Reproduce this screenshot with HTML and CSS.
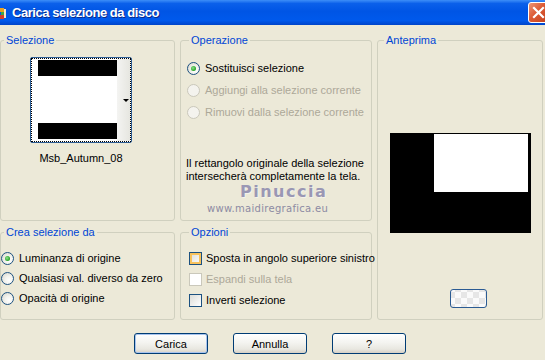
FILE: index.html
```html
<!DOCTYPE html>
<html lang="it">
<head>
    <meta charset="UTF-8">
    <title>Carica selezione da disco</title>
    <link rel="stylesheet" href="styles.css">
</head>
<body>
    <div class="titlebar">
        <svg class="title-icon" width="6" height="14" viewBox="0 0 6 14">
            <rect x="0" y="2" width="4" height="4" fill="#e8a020"/>
            <rect x="1" y="6" width="4" height="3" fill="#3aa84a"/>
            <rect x="0" y="9" width="4" height="4" fill="#d23c2a"/>
            <rect x="4" y="3" width="2" height="9" fill="#f4e8c8"/>
        </svg>
        <span class="title-text">Carica selezione da disco</span>
        <span class="close-btn">
            <svg width="13" height="13" viewBox="0 0 13 13">
                <path d="M2 2 L11 11 M11 2 L2 11" stroke="#fff" stroke-width="2.2" stroke-linecap="square"/>
            </svg>
        </span>
    </div>

    <div class="content">
        <div class="groups">
            <fieldset class="group group-sel">
                <legend class="lg-near">Selezione</legend>
                <div class="thumb-wrap">
                    <div class="thumb">
                        <div class="thumb-focus">
                            <div class="thumb-img">
                                <div class="bar"></div>
                                <div class="bar"></div>
                            </div>
                            <div class="thumb-side"><span class="arrow"></span></div>
                        </div>
                    </div>
                    <div class="caption">Msb_Autumn_08</div>
                </div>
            </fieldset>

            <fieldset class="group group-op">
                <legend class="lg-far">Operazione</legend>
                <div class="opt-list op-list">
                    <div class="opt"><span class="radio checked"></span>Sostituisci selezione</div>
                    <div class="opt disabled"><span class="radio"></span>Aggiungi alla selezione corrente</div>
                    <div class="opt disabled"><span class="radio"></span>Rimuovi dalla selezione corrente</div>
                </div>
                <p class="note">Il rettangolo originale della selezione<br>intersecherà completamente la tela.</p>
                <div class="watermark">
                    <span class="wm-name">Pinuccia</span>
                    <span class="wm-url">www.maidiregrafica.eu</span>
                </div>
            </fieldset>

            <fieldset class="group group-prev">
                <legend class="lg-mid">Anteprima</legend>
                <div class="preview"><div class="preview-sel"></div></div>
                <span class="swatch-btn"></span>
            </fieldset>

            <fieldset class="group group-crea">
                <legend class="lg-near">Crea selezione da</legend>
                <div class="opt-list crea-list">
                    <div class="opt"><span class="radio checked"></span>Luminanza di origine</div>
                    <div class="opt"><span class="radio"></span>Qualsiasi val. diverso da zero</div>
                    <div class="opt"><span class="radio"></span>Opacità di origine</div>
                </div>
            </fieldset>

            <fieldset class="group group-opz">
                <legend class="lg-far">Opzioni</legend>
                <div class="opt-list opz-list">
                    <div class="opt"><span class="check hot"></span>Sposta in angolo superiore sinistro</div>
                    <div class="opt disabled"><span class="check"></span>Espandi sulla tela</div>
                    <div class="opt"><span class="check"></span>Inverti selezione</div>
                </div>
            </fieldset>
        </div>

        <div class="buttons">
            <button class="btn btn-default">Carica</button>
            <button class="btn">Annulla</button>
            <button class="btn">?</button>
        </div>
    </div>
</body>
</html>
```

FILE: styles.css
```css
body {
    margin: 0;
    width: 545px;
    height: 360px;
    overflow: hidden;
    background-color: #ece9d8;
    font-family: "Liberation Sans", Arial, sans-serif;
    font-size: 11px;
    color: #000;
}

/* title bar */
.titlebar {
    height: 25px;
    display: flex;
    align-items: center;
    background: linear-gradient(#3d8ef8 0%, #0b60ea 14%, #0055e5 45%, #0059ec 82%, #0044c9 100%);
}

.title-icon {
    margin-right: 6px;
}

.title-text {
    color: #fff;
    font-weight: bold;
    font-size: 13px;
    letter-spacing: -0.45px;
    text-shadow: 1px 1px 0 #0a2a8a;
}

.close-btn {
    margin-left: auto;
    margin-right: -4px;
    width: 21px;
    height: 21px;
    box-sizing: border-box;
    border: 1px solid #fff;
    border-radius: 3px;
    display: flex;
    align-items: center;
    justify-content: center;
    background: linear-gradient(135deg, #eb9677 0%, #dc5a34 45%, #c4401c 100%);
}

/* groups */
.content {
    padding-top: 9px;
}

.groups {
    display: grid;
    grid-template-columns: 175px 192px 166px;
    grid-template-rows: 187px 94px;
    column-gap: 5px;
    row-gap: 5px;
}

.group {
    margin: 0;
    padding: 0;
    min-width: 0;
    border: 1px solid #d0d0bf;
    border-radius: 3px;
    position: relative;
}

.group legend {
    color: #0046d5;
    padding: 0 2px;
    line-height: 13px;
}

.lg-near { margin-left: 3px; }
.lg-mid { margin-left: 6px; }
.lg-far { margin-left: 8px; }

.group-prev {
    grid-column: 3;
    grid-row: 1 / span 2;
}

/* selezione thumbnail */
.thumb-wrap {
    width: 102px;
    margin: 10px 0 0 29px;
}

.thumb {
    height: 86px;
    box-sizing: border-box;
    border: 1px solid #2b5b93;
    border-radius: 2px;
    background: #fff;
}

.thumb-focus {
    height: 100%;
    box-sizing: border-box;
    border: 1px dotted #000;
    display: flex;
}

.thumb-img {
    flex: 1;
    padding: 1px 0 2px 6px;
    display: flex;
    flex-direction: column;
    justify-content: space-between;
}

.bar {
    height: 16px;
    background: #000;
}

.thumb-side {
    width: 12px;
    background: linear-gradient(90deg, #f4f4f2, #e6e6e0);
    display: flex;
    align-items: center;
    justify-content: flex-end;
    padding-right: 1px;
}

.arrow {
    width: 0;
    height: 0;
    border-left: 3px solid transparent;
    border-right: 3px solid transparent;
    border-top: 3px solid #000;
}

.caption {
    margin-top: 9px;
    text-align: center;
    line-height: 13px;
}

/* radios and checks */
.opt-list {
    display: flex;
    flex-direction: column;
}

.opt {
    display: flex;
    align-items: center;
    height: 13px;
    line-height: 13px;
    white-space: nowrap;
}

.opt.disabled {
    color: #aca899;
}

.radio {
    width: 13px;
    height: 13px;
    box-sizing: border-box;
    border: 1px solid #1c5180;
    border-radius: 50%;
    background: radial-gradient(circle at 65% 65%, #ffffff 0%, #f3f3ef 40%, #d4d2c6 100%);
    margin-right: 5px;
    flex: none;
    display: flex;
    align-items: center;
    justify-content: center;
}

.radio.checked::after {
    content: "";
    width: 5px;
    height: 5px;
    border-radius: 50%;
    background: radial-gradient(circle at 40% 40%, #8ee08e, #21a121 70%);
}

.disabled .radio {
    border-color: #cac8bb;
    background: #f4f3ee;
}

.check {
    width: 13px;
    height: 13px;
    box-sizing: border-box;
    border: 1px solid #1c5180;
    background: linear-gradient(135deg, #dcdcd7, #ffffff);
    margin-right: 4px;
    flex: none;
}

.check.hot {
    box-shadow: inset 0 0 0 2px #f8c25d;
}

.disabled .check {
    border-color: #cac8bb;
    background: #fff;
}

.op-list {
    padding: 15px 0 0 6px;
    gap: 9px;
}

.crea-list {
    padding-top: 13px;
    gap: 7px;
}

.opz-list {
    padding: 13px 0 0 8px;
    gap: 8px;
}

.note {
    margin: 38px 0 0 5px;
    line-height: 13px;
}

.watermark {
    position: absolute;
    left: 26px;
    top: 136px;
    display: flex;
    flex-direction: column;
    align-items: flex-start;
    pointer-events: none;
}

.wm-name {
    margin-left: 33px;
    font-family: "DejaVu Sans", sans-serif;
    font-weight: bold;
    font-size: 16px;
    letter-spacing: 1.5px;
    line-height: 18px;
    color: #9a97b4;
    text-shadow: 1px 1px 0 #f4f2ea;
}

.wm-url {
    margin-top: 2px;
    font-family: "DejaVu Sans", sans-serif;
    font-size: 10px;
    letter-spacing: 0.3px;
    line-height: 12px;
    color: #8d8ba3;
}

/* anteprima */
.preview {
    width: 141px;
    height: 100px;
    margin: 86px 0 0 12px;
    box-sizing: border-box;
    padding: 1px 3px 0 0;
    background: #000;
    display: flex;
    justify-content: flex-end;
}

.preview-sel {
    width: 94px;
    height: 58px;
    background: #fff;
}

.swatch-btn {
    display: block;
    width: 37px;
    height: 19px;
    margin: 56px 0 0 72px;
    box-sizing: border-box;
    border: 1px solid #2b5b93;
    border-radius: 3px;
    background-color: #f6f6f6;
    background-image: conic-gradient(#e6e6e6 25%, #fafafa 0 50%, #e6e6e6 0 75%, #fafafa 0);
    background-size: 12px 12px;
    background-position: 4px 2px;
}

/* bottom buttons */
.buttons {
    display: flex;
    gap: 25px;
    padding-left: 134px;
    margin-top: 13px;
}

.btn {
    width: 74px;
    height: 21px;
    padding: 0;
    border: 1px solid #003c74;
    border-radius: 3px;
    background: linear-gradient(#ffffff 0%, #f4f4f0 45%, #e8e7e0 80%, #d6d0c5 100%);
    font-family: "Liberation Sans", Arial, sans-serif;
    font-size: 11px;
    color: #000;
}

.btn-default {
    box-shadow: inset 0 0 0 1px #a8c4ee;
}
```
